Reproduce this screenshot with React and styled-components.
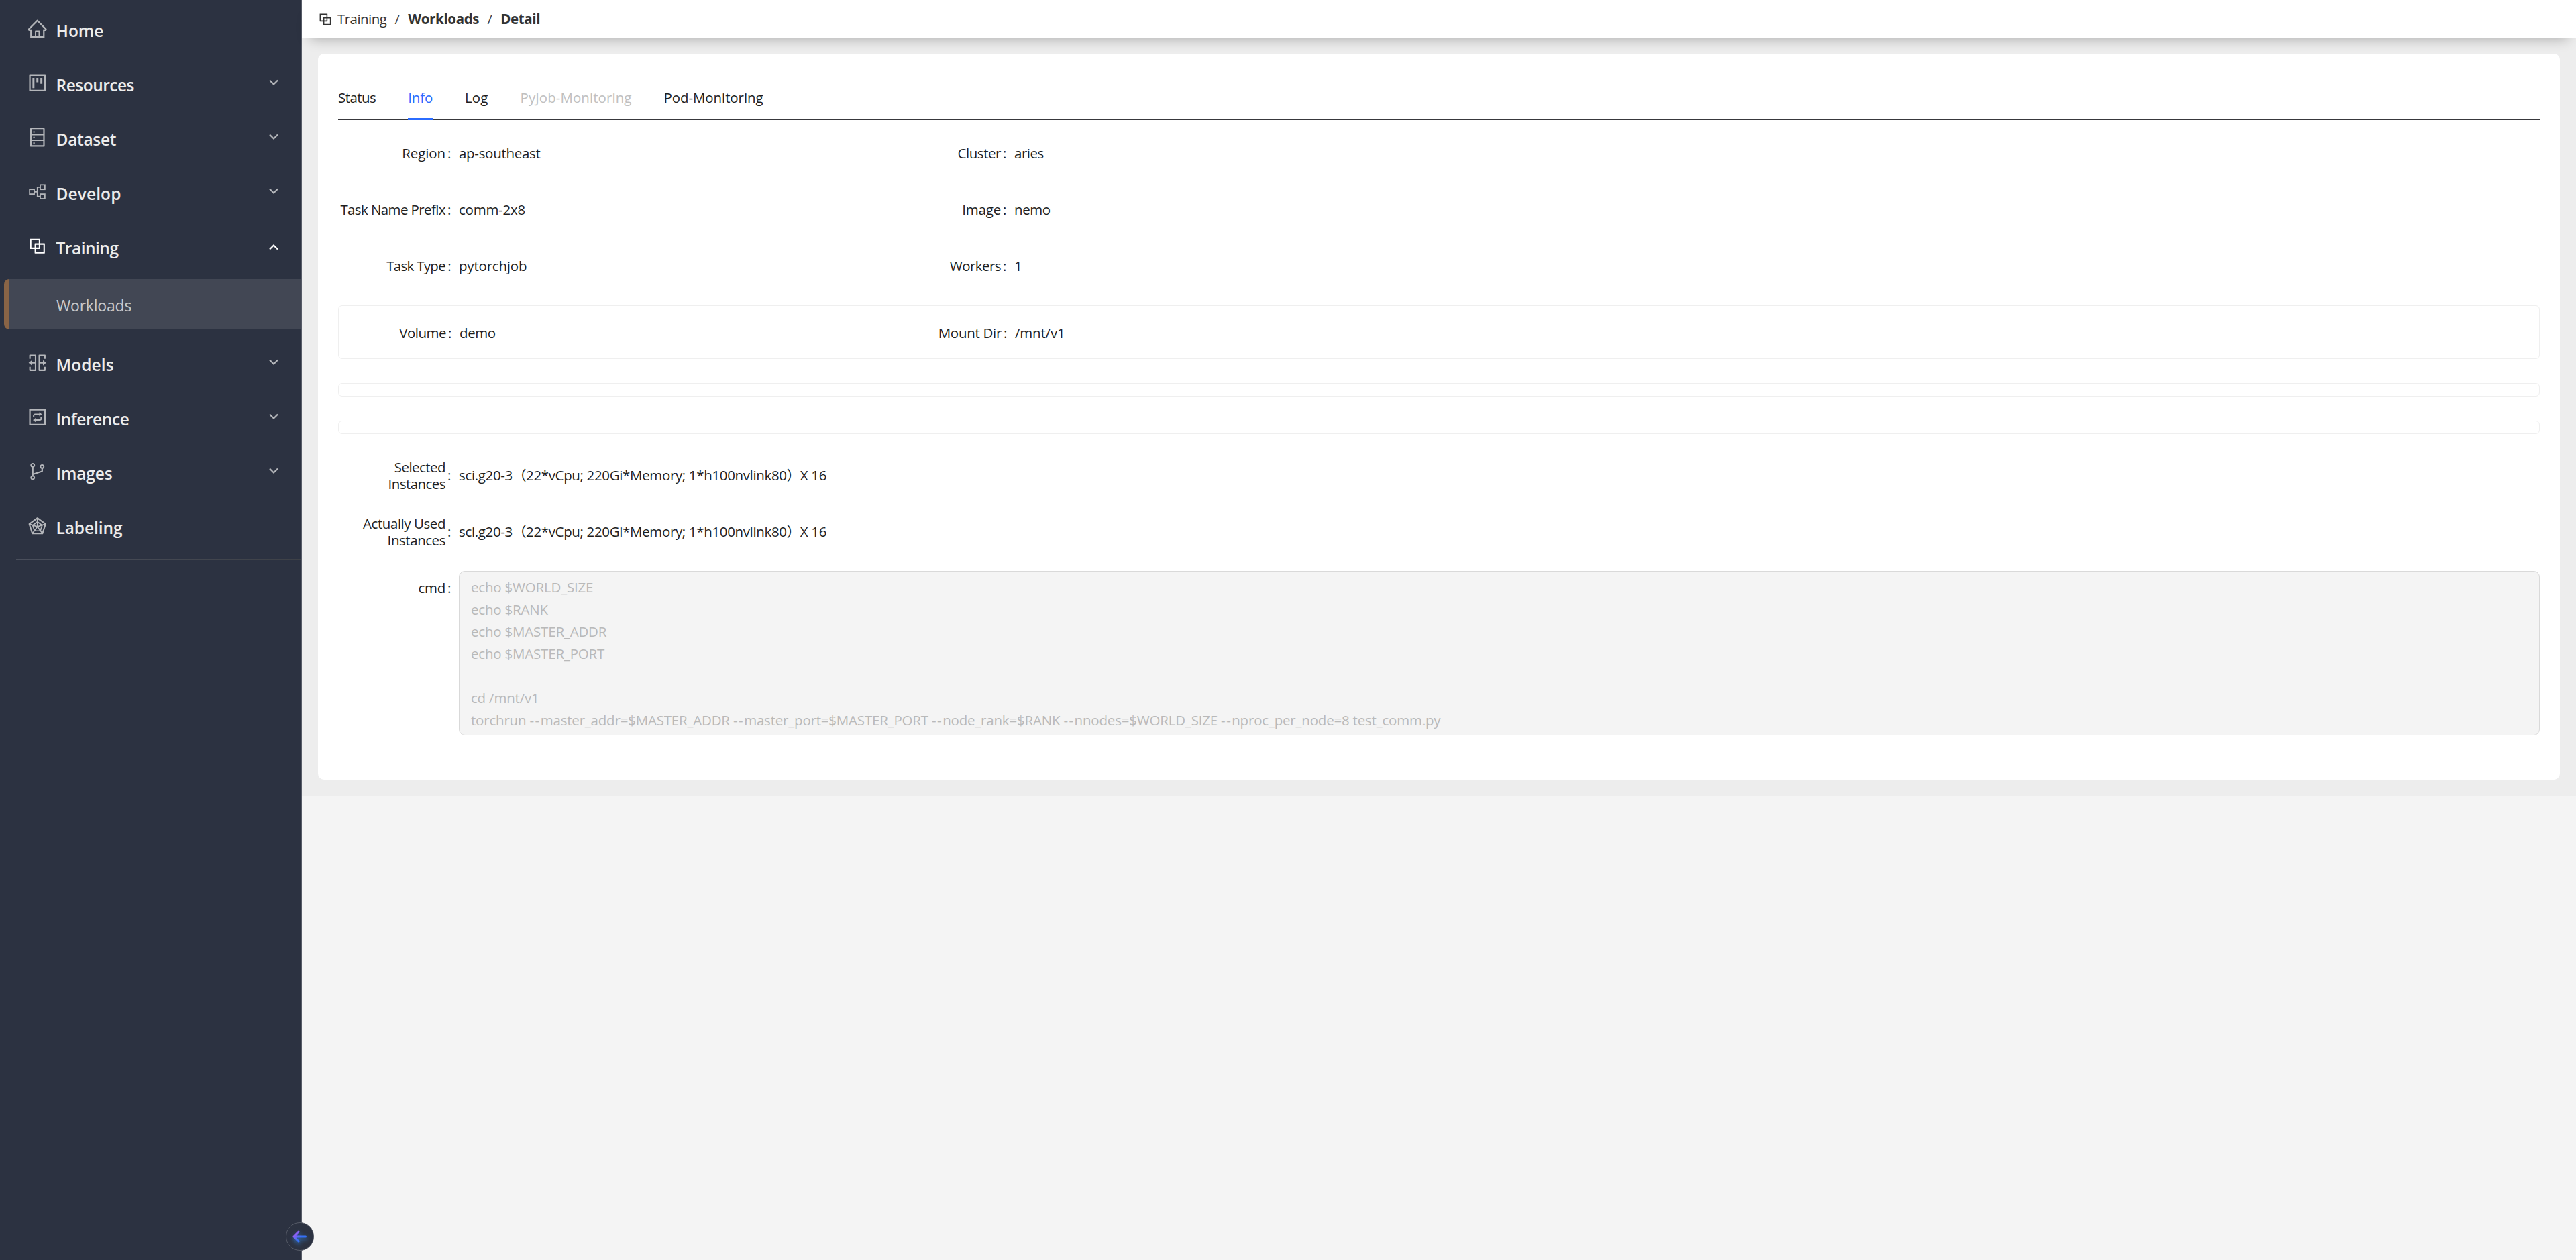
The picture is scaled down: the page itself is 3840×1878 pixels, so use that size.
import React from 'react';
import styled, { createGlobalStyle } from 'styled-components'
import {
    AiOutlineHome,
    AiOutlineProject,
    AiOutlineDatabase,
    AiOutlineBlock,
    AiOutlineSplitCells,
    AiOutlineInteraction,
    AiOutlineBranches,
    AiOutlineRadarChart,
} from 'react-icons/ai'

const GlobalStyle = createGlobalStyle`
*{ box-sizing:border-box; }
body{
margin:0;
background:#f4f4f4;
color:#1f1f1f;
font-family:"Open Sans", "Noto Sans CJK SC", sans-serif;
font-size:20.5px;
line-height:33px;
}
`

const Layout = styled.div`
display:flex;
height:1878px;
`

const Sidebar = styled.nav`
position:relative;
flex:none;
width:450px;
padding-top:2px;
background:#2c3241;
border-right:1px solid #565b67;
`

const MenuItem = styled.div`
display:flex;
align-items:center;
height:81px;
padding:0 34px 0 40px;
color:${props => props.$open ? '#fff' : '#b4b6ba'};
svg{
flex:none;
}
`

const MenuText = styled.span`
flex:1;
margin-left:12px;
padding-top:5px;
color:#ececec;
font-size:24.5px;
font-weight:600;
letter-spacing:${props => props.$track || 0}px;
`

const Arrow = styled.svg`
margin:${props => props.$up ? '3px 0 0' : '0 0 2px'};
`

const SubItem = styled.div`
display:flex;
align-items:center;
height:75px;
margin:9px 0 9px 6px;
padding:3px 0 0 70px;
border-left:8px solid #896446;
border-radius:8px 0 0 8px;
background:#424754;
color:#c8c9cb;
font-size:23px;
letter-spacing:-0.2px;
`

const MenuDivider = styled.div`
height:2px;
margin:9px 0 0 24px;
background:linear-gradient(90deg, #4a4f5c, #3e4147);
`

const CollapseButton = styled.div`
position:absolute;
z-index:5;
left:426px;
top:1822px;
display:flex;
align-items:center;
justify-content:center;
width:42px;
height:42px;
border:1px solid #565b67;
border-radius:50%;
background:#2c3241;
svg{
filter:drop-shadow(1px 3px 3px rgba(50, 130, 220, 0.85));
}
`

const Main = styled.main`
flex:1;
min-width:0;
`

const Header = styled.header`
position:relative;
z-index:1;
display:flex;
align-items:center;
height:56px;
padding:1px 0 0 23px;
background:#fff;
box-shadow:0 13px 20px -12px rgba(0, 0, 0, 0.31);
svg{
margin-right:6px;
}
`

const Crumb = styled.span`
color:#333;
font-weight:${props => props.$strong ? 700 : 400};
letter-spacing:${props => props.$strong ? -0.35 : -0.55}px;
`

const Slash = styled.span`
width:32px;
text-align:center;
color:#444;
`

const Content = styled.div`
padding:24px;
background:#ededed;
`

const Card = styled.section`
padding:30px 30px 66px;
border-radius:9px;
background:#fff;
`

const Tabs = styled.div`
display:flex;
gap:48px;
height:69px;
border-bottom:1px solid #38383c;
`

const Tab = styled.div`
height:69px;
padding-top:19px;
white-space:nowrap;
letter-spacing:${props => props.$track || 0}px;
color:${props => props.$disabled ? '#c0c0c0' : props.$active ? '#2b6cff' : '#1f1f1f'};
border-bottom:${props => props.$active ? '3px solid #2b6cff' : 'none'};
`

const Form = styled.div`
padding-top:25px;
`

const FormRow = styled.div`
display:grid;
grid-template-columns:828px 1fr;
margin-bottom:36px;
`

const Field = styled.div`
display:flex;
min-height:48px;
`

const Label = styled.div`
display:flex;
align-items:center;
justify-content:flex-end;
flex:none;
width:180px;
height:48px;
padding:1px 12px 0 0;
line-height:24.5px;
text-align:right;
white-space:pre;
letter-spacing:${props => props.$track || 0}px;
`

const Colon = styled.span`
width:5px;
margin-left:3px;
text-align:center;
`

const Value = styled.div`
display:flex;
align-items:center;
padding-top:1px;
white-space:pre;
letter-spacing:${props => props.$track || 0}px;
`

const Group = styled.div`
height:${props => props.$filled ? 80 : 20}px;
margin:${props => props.$filled ? '-1px' : '0'} 0 ${props => props.$last ? 37 : 36}px;
padding:${props => props.$filled ? '16px 0' : '0'};
border:1px solid #efefef;
border-radius:6px;
`

const Command = styled.div`
flex:1;
height:245px;
margin-top:-1px;
padding:7px 17px;
border:1px solid #d9d9d9;
border-radius:9px;
background:#f4f4f4;
color:#b9b9b9;
letter-spacing:-0.2px;
white-space:pre;
`

const CommandLine = styled.div`
height:33px;
`

const Dashes = styled.span`
letter-spacing:1.5px;
`

const CommandField = styled.div`
display:flex;
`

const PartitionIcon = ({ size }) => (
    <svg width={size} height={size} viewBox="0 0 32 32" fill="none" stroke="currentColor" strokeWidth="1.8">
        <rect x="4.2" y="12.4" width="7" height="7" />
        <rect x="20.3" y="5.4" width="7" height="7" />
        <rect x="20.3" y="19.4" width="7" height="7" />
        <path d="M11.2 16H16M20.3 9H16V23H20.3" />
    </svg>
)

const menuTop = [
    { title: 'Home', Icon: AiOutlineHome },
    { title: 'Resources', Icon: AiOutlineProject, arrow: true, track: -0.5 },
    { title: 'Dataset', Icon: AiOutlineDatabase, arrow: true, track: -0.3 },
    { title: 'Develop', Icon: PartitionIcon, arrow: true, track: 0.1 },
    { title: 'Training', Icon: AiOutlineBlock, arrow: true, open: true, track: -0.5 },
]

const menuBottom = [
    { title: 'Models', Icon: AiOutlineSplitCells, arrow: true, track: 0.1 },
    { title: 'Inference', Icon: AiOutlineInteraction, arrow: true, track: -0.4 },
    { title: 'Images', Icon: AiOutlineBranches, arrow: true, track: -0.1 },
    { title: 'Labeling', Icon: AiOutlineRadarChart, track: -0.1 },
]

const instances = 'sci.g20-3（22*vCpu; 220Gi*Memory; 1*h100nvlink80）X 16'

const command = [
    'echo $WORLD_SIZE',
    'echo $RANK',
    'echo $MASTER_ADDR',
    'echo $MASTER_PORT',
    '',
    'cd /mnt/v1',
    'torchrun --master_addr=$MASTER_ADDR --master_port=$MASTER_PORT --node_rank=$RANK --nnodes=$WORLD_SIZE --nproc_per_node=8 test_comm.py',
]

const Chevron = ({ up }) => (
    <Arrow $up={up} width="14" height="10" viewBox="0 0 14 10" fill="none" stroke="currentColor" strokeWidth="2.2">
        <path d={up ? 'M1 8.5 7 2.5 13 8.5' : 'M1 1.5 7 7.5 13 1.5'} />
    </Arrow>
)

const MenuEntry = ({ item }) => (
    <MenuItem $open={item.open}>
        <item.Icon size={31.5} />
        <MenuText $track={item.track}>{item.title}</MenuText>
        {item.arrow && <Chevron up={item.open} />}
    </MenuItem>
)

const FormField = ({ label, labelTrack, track, children }) => (
    <Field>
        <Label $track={labelTrack}>{label}<Colon>:</Colon></Label>
        <Value $track={track}>{children}</Value>
    </Field>
)

const App = () => {
    return (
        <Layout>
            <GlobalStyle />
            <Sidebar>
                {menuTop.map(item => <MenuEntry key={item.title} item={item} />)}
                <SubItem>Workloads</SubItem>
                {menuBottom.map(item => <MenuEntry key={item.title} item={item} />)}
                <MenuDivider />
                <CollapseButton>
                    <svg width="22" height="18" viewBox="0 0 22 18" fill="none" strokeWidth="3" strokeLinecap="round" strokeLinejoin="round">
                        <defs>
                            <linearGradient id="back" gradientUnits="userSpaceOnUse" x1="2" y1="3" x2="14" y2="14">
                                <stop offset="0.15" stopColor="#9a5cf0" />
                                <stop offset="0.75" stopColor="#3470f6" />
                            </linearGradient>
                        </defs>
                        <path d="M9 2 2 9 9 16M2 9H19.5" stroke="url(#back)" />
                    </svg>
                </CollapseButton>
            </Sidebar>
            <Main>
                <Header>
                    <AiOutlineBlock size={24} color="#333" />
                    <Crumb>Training</Crumb>
                    <Slash>/</Slash>
                    <Crumb $strong>Workloads</Crumb>
                    <Slash>/</Slash>
                    <Crumb $strong>Detail</Crumb>
                </Header>
                <Content>
                    <Card>
                        <Tabs>
                            <Tab $track={-0.55}>Status</Tab>
                            <Tab $active $track={-0.2}>Info</Tab>
                            <Tab $track={0.1}>Log</Tab>
                            <Tab $disabled $track={0.06}>PyJob-Monitoring</Tab>
                            <Tab $track={-0.08}>Pod-Monitoring</Tab>
                        </Tabs>
                        <Form>
                            <FormRow>
                                <FormField label="Region" labelTrack={-0.1} track={-0.3}>ap-southeast</FormField>
                                <FormField label="Cluster" labelTrack={-0.45} track={-0.5}>aries</FormField>
                            </FormRow>
                            <FormRow>
                                <FormField label="Task Name Prefix" labelTrack={-0.6} track={-0.25}>comm-2x8</FormField>
                                <FormField label="Image" labelTrack={-0.2} track={-0.4}>nemo</FormField>
                            </FormRow>
                            <FormRow>
                                <FormField label="Task Type" labelTrack={-0.7} track={-0.2}>pytorchjob</FormField>
                                <FormField label="Workers" labelTrack={-0.55}>1</FormField>
                            </FormRow>
                            <Group $filled>
                                <FormRow>
                                    <FormField label="Volume" labelTrack={-0.5} track={-0.4}>demo</FormField>
                                    <FormField label="Mount Dir" labelTrack={-0.3} track={-0.2}>/mnt/v1</FormField>
                                </FormRow>
                            </Group>
                            <Group />
                            <Group $last />
                            <FormRow>
                                <FormField label={'Selected\nInstances'} labelTrack={-0.55} track={-0.35}>{instances}</FormField>
                            </FormRow>
                            <FormRow>
                                <FormField label={'Actually Used\nInstances'} labelTrack={-0.45} track={-0.35}>{instances}</FormField>
                            </FormRow>
                            <CommandField>
                                <Label $track={-0.3}>cmd<Colon>:</Colon></Label>
                                <Command>
                                    {command.map((line, n) => (
                                        <CommandLine key={n}>
                                            {line.split(/(--)/).map((part, i) => part === '--' ? <Dashes key={i}>--</Dashes> : part)}
                                        </CommandLine>
                                    ))}
                                </Command>
                            </CommandField>
                        </Form>
                    </Card>
                </Content>
            </Main>
        </Layout>
    )
}

export default App;
